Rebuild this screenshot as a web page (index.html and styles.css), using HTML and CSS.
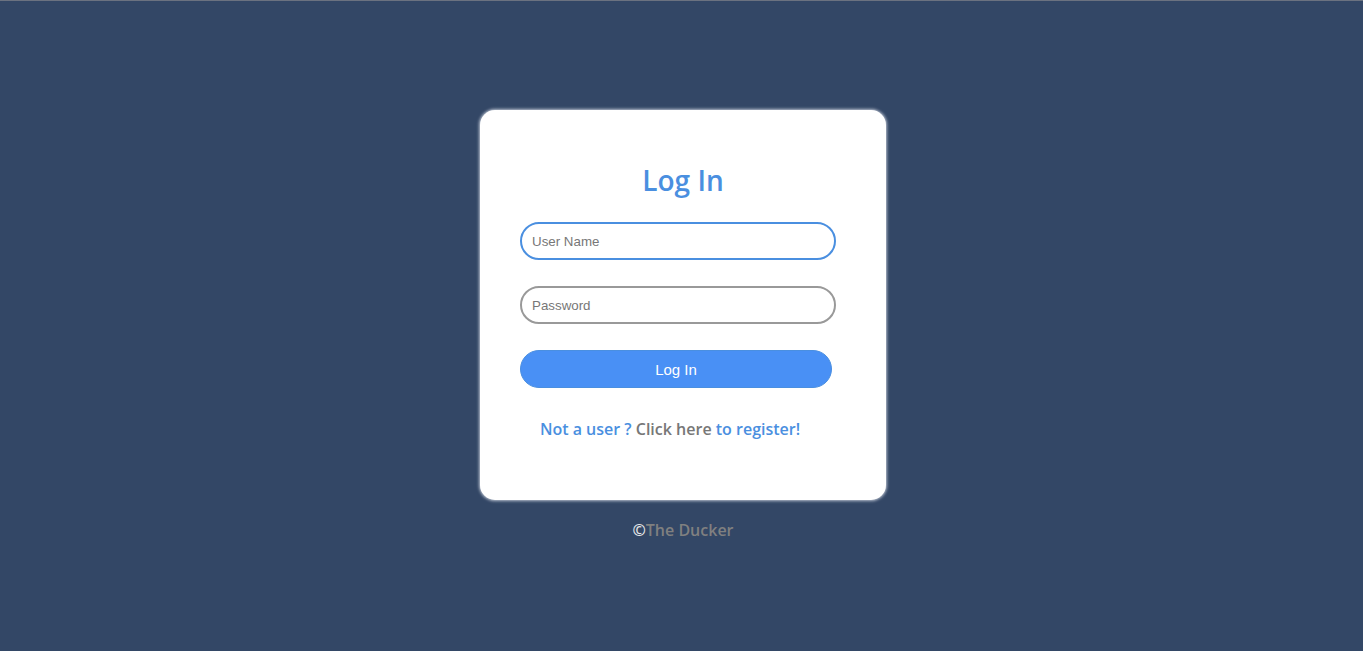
FILE: index.html
```html
<!DOCTYPE html>
<html>
<head>
<meta charset="utf-8">
<link rel="stylesheet" href="styles.css">
</head>
<body>
<div class="page">
  <div class="card">
    <h1 class="title">Log In</h1>
    <form class="form">
      <input class="field field-active" type="text" placeholder="User Name">
      <input class="field" type="password" placeholder="Password">
      <button class="btn" type="button">Log In</button>
    </form>
    <p class="register">Not a user ? <span class="here">Click here</span> to register!</p>
  </div>
  <p class="footer"><span class="copy">©</span>The Ducker</p>
</div>
</body>
</html>
```
FILE: styles.css
```css
html { background: #334766; }
body {
  margin: 0;
  border-top: 1px solid #6b7280;
  background: #334766;
  font-family: "Open Sans", sans-serif;
}
.page {
  display: flex;
  flex-direction: column;
  align-items: center;
  padding-top: 109px;
  padding-left: 3px;
}
.card {
  box-sizing: border-box;
  width: 406px;
  height: 390px;
  background: #fff;
  border-radius: 15px;
  box-shadow: 0 0 3px 1px rgba(220, 225, 235, 0.8);
  padding: 0 40px;
  display: flex;
  flex-direction: column;
}
.title {
  margin: 51px 0 0;
  text-align: center;
  font-size: 28px;
  font-weight: 600;
  line-height: 38px;
  color: #4a8fe0;
}
.form {
  display: flex;
  flex-direction: column;
  margin-top: 23px;
}
.field {
  box-sizing: border-box;
  width: 316px;
  height: 38px;
  border: 2px solid #999;
  border-radius: 20px;
  padding: 0 10px;
  font-family: "Liberation Sans", Arial, sans-serif;
  font-size: 13.33px;
  color: #333;
  outline: none;
  margin-bottom: 26px;
  background: #fff;
}
.field::placeholder { color: #777; }
.field-active { border-color: #4a8fe0; }
.btn {
  box-sizing: border-box;
  width: 312px;
  height: 38px;
  border: 1px solid #4a8fe0;
  border-radius: 20px;
  background: #4990f5;
  color: #fff;
  font-family: "Liberation Sans", Arial, sans-serif;
  font-size: 15px;
  cursor: pointer;
}
.register {
  margin: 30px 0 0;
  text-align: center;
  font-size: 16px;
  font-weight: 600;
  color: #4a8fe0;
  padding-right: 26px;
}
.here { color: #777; }
.footer {
  margin: 19px 0 0;
  font-size: 16px;
  font-weight: 600;
  color: #808080;
}
.copy { color: #e6e6e6; }
```
